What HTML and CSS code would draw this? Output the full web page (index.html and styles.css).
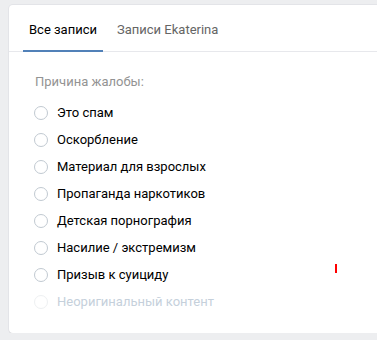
FILE: index.html
```html
<!DOCTYPE html>
<html>
<head>
    <title>Жалоба</title>
    <link rel="stylesheet" href="styles.css">
</head>
<body>
    <div class="card">
        <div class="tabs">
            <div class="tab active">Все записи</div>
            <div class="tab">Записи Ekaterina</div>
        </div>
        <form class="report">
            <div class="report-title">Причина жалобы:</div>
            <label class="radio"><input type="radio" name="reason"><span class="radio-box"></span>Это спам</label>
            <label class="radio"><input type="radio" name="reason"><span class="radio-box"></span>Оскорбление</label>
            <label class="radio"><input type="radio" name="reason"><span class="radio-box"></span>Материал для взрослых</label>
            <label class="radio"><input type="radio" name="reason"><span class="radio-box"></span>Пропаганда наркотиков</label>
            <label class="radio"><input type="radio" name="reason"><span class="radio-box"></span>Детская порнография</label>
            <label class="radio"><input type="radio" name="reason"><span class="radio-box"></span>Насилие / экстремизм</label>
            <label class="radio"><input type="radio" name="reason"><span class="radio-box"></span>Призыв к суициду</label>
            <label class="radio disabled"><input type="radio" name="reason" disabled><span class="radio-box"></span>Неоригинальный контент</label>
        </form>
        <!-- stray marker from the original screen -->
        <div class="marker"></div>
    </div>
</body>
</html>
```

FILE: styles.css
```css
body {
    background-color: #edeef0;
    font-family: Roboto, "Open Sans", Arial, sans-serif;
    font-size: 13px;
    color: #000;
    margin: 0;
    padding: 5px 0 0 9px;
}
.card {
    position: relative;
    background-color: #fff;
    border-radius: 4px 0 0 4px;
    box-shadow: 0 1px 0 0 #d7d8db, 0 0 0 1px #e3e4e8;
    height: 328px;
}
.tabs {
    display: flex;
    gap: 8px;
    padding: 0 14px;
    height: 46px;
    border-bottom: 1px solid #e7e8ec;
}
.tab {
    padding: 17px 6px 0;
    line-height: 16px;
    height: 28px;
    color: #656565;
    border-bottom: 2px solid transparent;
}
.tab.active {
    color: #000;
    border-bottom-color: #5181b8;
}
.report {
    padding: 22px 26px 0;
}
.report-title {
    color: #939393;
    line-height: 16px;
    margin-bottom: 9px;
}
.radio {
    display: flex;
    align-items: center;
    height: 27px;
    line-height: 16px;
    cursor: pointer;
}
.radio input {
    display: none;
}
.radio-box {
    width: 12px;
    height: 12px;
    border: 1px solid #c1c9d1;
    border-radius: 50%;
    margin: 0 9px 0 -1px;
}
.radio.disabled {
    color: #c5d0db;
    cursor: default;
}
.radio.disabled .radio-box {
    border-color: #eef0f2;
}
.marker {
    position: absolute;
    left: 326px;
    top: 259px;
    width: 2px;
    height: 9px;
    background-color: #f00;
}
```
